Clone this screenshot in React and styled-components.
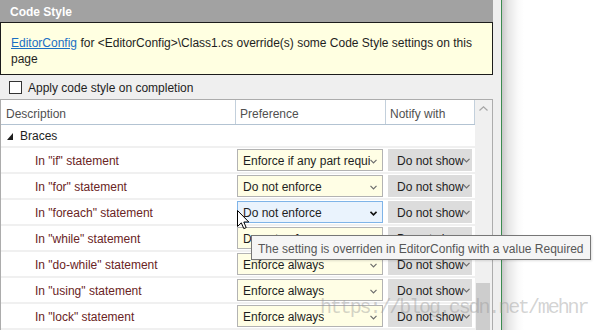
import React from 'react';
import styled, { createGlobalStyle } from 'styled-components';

const Global = createGlobalStyle`
  html, body { margin: 0; padding: 0; background: #fff; }
  body {
    font-family: "Segoe UI", "Liberation Sans", Arial, sans-serif;
    font-size: 12px;
    color: #1e1e1e;
  }
`;

const Root = styled.div`
  position: relative;
  width: 600px;
  height: 330px;
  overflow: hidden;
  display: flex;
  background: #fff;
`;

const Panel = styled.div`
  width: 502px;
  flex: none;
  box-sizing: border-box;
  padding-right: 8px;
  background: #efefef;
  border-right: 1px solid #3b8b50;
  display: flex;
  flex-direction: column;
  overflow: hidden;
`;

const Shade = styled.div`
  flex: 1;
  background: linear-gradient(to right, #c9c9c9 0, #e6e6e6 6px, #fafafa 16px, #fff 22px);
`;

const TitleBar = styled.div`
  height: 22px;
  flex: none;
  box-sizing: border-box;
  background: #a2a2a2;
  color: #fff;
  font-weight: bold;
  padding: 2px 0 0 10px;
  display: flex;
  align-items: center;
`;

const Notice = styled.div`
  height: 53px;
  flex: none;
  box-sizing: border-box;
  border: 1px solid #1c1c1c;
  background: #ffffe1;
  padding: 12px 10px 0;
  line-height: 16px;
  color: #1e1e1e;
`;

const Link = styled.a`
  color: #1a6fc4;
  text-decoration: underline;
  cursor: pointer;
`;

const CheckRow = styled.label`
  height: 24px;
  flex: none;
  display: flex;
  align-items: center;
  gap: 6px;
  padding-left: 9px;
  color: #1e1e1e;
`;

const CheckBox = styled.span`
  width: 13px;
  height: 13px;
  box-sizing: border-box;
  border: 1px solid #333;
  background: #fff;
`;

const CheckLabel = styled.span`
  padding-top: 1px;
`;

const Table = styled.div`
  flex: 1;
  min-height: 0;
  display: flex;
  border: 1px solid #acacac;
  border-bottom: none;
  background: #fff;
  overflow: hidden;
`;

const Main = styled.div`
  width: 474px;
  display: flex;
  flex-direction: column;
`;

const HeaderRow = styled.div`
  flex: none;
  display: grid;
  grid-template-columns: 235px 150px 89px;
  height: 25px;
  box-sizing: border-box;
  border-bottom: 1px solid #b3c3d2;
`;

const HeaderCell = styled.div`
  border-right: 1px solid #c3d0dc;
  padding: 3px 0 0 ${p => p.$pad}px;
  display: flex;
  align-items: center;
  color: #505050;
`;

const GroupRow = styled.div`
  flex: none;
  height: 23px;
  box-sizing: border-box;
  border-bottom: 2px solid #f0f0f0;
  display: flex;
  align-items: center;
  gap: 7px;
  padding: 1px 0 0 6px;
  color: #1e1e1e;
`;

const DataRow = styled.div`
  flex: none;
  display: grid;
  grid-template-columns: 235px 150px 89px;
  height: 26px;
  box-sizing: border-box;
  border-bottom: 2px solid #f0f0f0;
  align-items: center;
`;

const Desc = styled.div`
  padding: 2px 0 0 34px;
  color: #6a2424;
  white-space: nowrap;
`;

const Cell = styled.div`
  padding-left: ${p => p.$pad}px;
`;

const Select = styled.div`
  position: relative;
  width: 146px;
  height: 22px;
  box-sizing: border-box;
  border: 1px solid ${p => (p.$hover ? '#7fb4e8' : '#b3b3b3')};
  background: ${p => (p.$hover ? '#eaf3fd' : '#fffee5')};
  padding: 2px 12px 0 5px;
  display: flex;
  align-items: center;
  white-space: nowrap;
  overflow: hidden;
  color: #1e1e1e;
`;

const SelectText = styled.span`
  overflow: hidden;
`;

const Notify = styled.div`
  position: relative;
  width: 84px;
  height: 22px;
  box-sizing: border-box;
  background: #dcdcdc;
  padding: 2px 0 0 9px;
  display: flex;
  align-items: center;
  white-space: nowrap;
  overflow: hidden;
  color: #1e1e1e;
`;

const Chevron = styled.svg`
  position: absolute;
  right: ${p => p.$right}px;
  top: 9px;
`;

const Scrollbar = styled.div`
  width: 17px;
  background: #f0f0f0;
  display: flex;
  flex-direction: column;
`;

const ArrowBtn = styled.div`
  height: 17px;
  flex: none;
  display: flex;
  align-items: center;
  justify-content: center;
`;

const Track = styled.div`
  flex: 1;
  padding-top: 166px;
`;

const Thumb = styled.div`
  margin-left: 1px;
  width: 14px;
  height: 80px;
  background: #cdcdcd;
`;

const Tooltip = styled.div`
  position: absolute;
  left: 251px;
  top: 235px;
  height: 25px;
  box-sizing: border-box;
  border: 1px solid #767676;
  background: #f5f5f5;
  padding: 2px 6px 0;
  display: flex;
  align-items: center;
  color: #575757;
  white-space: nowrap;
  box-shadow: 1px 1px 2px rgba(0, 0, 0, 0.12);
`;

const Cursor = styled.svg`
  position: absolute;
  left: 237px;
  top: 210px;
`;

const Watermark = styled.div`
  position: absolute;
  left: 320px;
  top: 296px;
  font-family: "Liberation Mono", "Courier New", monospace;
  font-size: 20px;
  letter-spacing: -2.1px;
  color: rgba(150, 150, 150, 0.42);
  white-space: nowrap;
  pointer-events: none;
`;

const Down = ({ right, dark }) => (
  <Chevron $right={right} width="7" height="5" viewBox="0 0 7 5">
    <polyline points="0.5,0.8 3.5,3.8 6.5,0.8" fill="none" stroke={dark ? '#111' : '#6d6d6d'} strokeWidth={dark ? 1.6 : 1.2} />
  </Chevron>
);

const rows = [
  { d: 'In "if" statement', p: 'Enforce if any part requires braces' },
  { d: 'In "for" statement', p: 'Do not enforce' },
  { d: 'In "foreach" statement', p: 'Do not enforce', hover: true },
  { d: 'In "while" statement', p: 'Do not enforce' },
  { d: 'In "do-while" statement', p: 'Enforce always' },
  { d: 'In "using" statement', p: 'Enforce always' },
  { d: 'In "lock" statement', p: 'Enforce always' },
  { d: 'In "fixed" statement', p: 'Enforce always' },
];

export default function App() {
  return (
    <Root>
      <Global />
      <Panel>
        <TitleBar>Code Style</TitleBar>
        <Notice>
          <Link>EditorConfig</Link> for &lt;EditorConfig&gt;\Class1.cs override(s) some Code Style settings on this page
        </Notice>
        <CheckRow>
          <CheckBox />
          <CheckLabel>Apply code style on completion</CheckLabel>
        </CheckRow>
        <Table>
          <Main>
            <HeaderRow>
              <HeaderCell $pad={5}>Description</HeaderCell>
              <HeaderCell $pad={4}>Preference</HeaderCell>
              <HeaderCell $pad={4}>Notify with</HeaderCell>
            </HeaderRow>
            <GroupRow>
              <svg width="6" height="7" viewBox="0 0 6 7">
                <polygon points="6,0 6,7 0,7" fill="#1e1e1e" />
              </svg>
              Braces
            </GroupRow>
            {rows.map(r => (
              <DataRow key={r.d}>
                <Desc>{r.d}</Desc>
                <Cell $pad={1}>
                  <Select $hover={r.hover}>
                    <SelectText>{r.p}</SelectText>
                    <Down right={5} dark={r.hover} />
                  </Select>
                </Cell>
                <Cell $pad={2}>
                  <Notify>
                    Do not show
                    <Down right={2} />
                  </Notify>
                </Cell>
              </DataRow>
            ))}
          </Main>
          <Scrollbar>
            <ArrowBtn>
              <svg width="9" height="5" viewBox="0 0 9 5">
                <polyline points="0.5,4.5 4.5,0.8 8.5,4.5" fill="none" stroke="#a6a6a6" strokeWidth="1.2" />
              </svg>
            </ArrowBtn>
            <Track>
              <Thumb />
            </Track>
          </Scrollbar>
        </Table>
      </Panel>
      <Shade />
      <Tooltip>The setting is overriden in EditorConfig with a value Required</Tooltip>
      <Cursor width="13" height="20" viewBox="0 0 13 20">
        <path d="M0.5,0.5 L0.5,16.5 L4.3,12.8 L6.8,18.6 L9.2,17.6 L6.8,12 L11.8,12 Z" fill="#fff" stroke="#000" strokeWidth="1" strokeLinejoin="miter" />
      </Cursor>
      <Watermark>https://blog.csdn.net/mehnr</Watermark>
    </Root>
  );
}
